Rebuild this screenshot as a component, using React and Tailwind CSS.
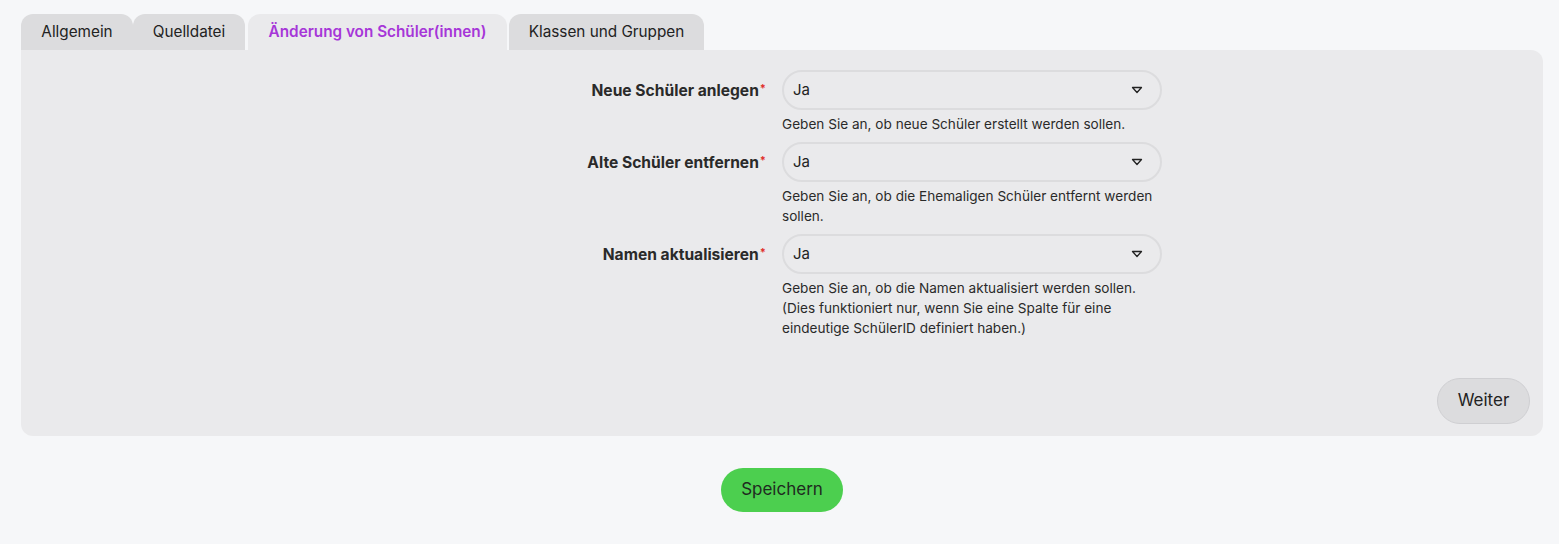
import React from "react";

const Caret = () => (
  <svg width="12" height="8" viewBox="0 0 12 8" className="shrink-0">
    <path d="M1.5 1.5 H10.5 L6 6.5 Z" fill="none" stroke="#222" strokeWidth="1.3" strokeLinejoin="round" />
  </svg>
);

function Row({ label, help }) {
  return (
    <div className="grid grid-cols-2 mb-2">
      <div className="flex justify-end items-start pr-4">
        <div className="h-10 flex items-center pt-[1px] text-[15.6px] font-bold text-[#2a2a2a]">
          {label}
          <span className="text-[#e0302a] text-[11px] self-start mt-[9px] ml-[1px]">*</span>
        </div>
      </div>
      <div>
        <div className="w-[380px] h-10 rounded-full border-2 border-[#dcdcde] flex items-center justify-between pl-[9px] pr-[17px] text-[15px] text-[#222]">
          <span>Ja</span>
          <Caret />
        </div>
        <div className="w-[382px] mt-1 text-[13.6px] leading-5 text-[#2a2a2a]">{help}</div>
      </div>
    </div>
  );
}

export default function App() {
  return (
    <div className="min-h-[544px] bg-[#f6f7f9] pt-[14px] pl-[21px] pr-[16px]" style={{ fontFamily: "Inter, 'Noto Sans', sans-serif" }}>
      <div className="flex items-end text-[15.3px] text-[#222]">
        <div className="h-9 w-[112px] flex items-center justify-center rounded-t-xl bg-[#dcdcde]">Allgemein</div>
        <div className="h-9 w-[112px] flex items-center justify-center rounded-t-xl bg-[#dcdcde]">Quelldatei</div>
        <div className="h-9 w-[259px] flex items-center justify-center rounded-t-xl bg-[#eaeaec] ml-[3px] text-[#a636d8] font-semibold">Änderung von Schüler(innen)</div>
        <div className="h-9 w-[195px] flex items-center justify-center rounded-t-xl bg-[#dcdcde] ml-[2px]">Klassen und Gruppen</div>
      </div>
      <div className="bg-[#eaeaec] rounded-b-xl rounded-tr-xl pt-5 pb-3 px-[13px]">
        <Row label="Neue Schüler anlegen" help="Geben Sie an, ob neue Schüler erstellt werden sollen." />
        <Row label="Alte Schüler entfernen" help="Geben Sie an, ob die Ehemaligen Schüler entfernt werden sollen." />
        <Row label="Namen aktualisieren" help="Geben Sie an, ob die Namen aktualisiert werden sollen. (Dies funktioniert nur, wenn Sie eine Spalte für eine eindeutige SchülerID definiert haben.)" />
        <div className="flex justify-end mt-10">
          <button className="h-[46px] w-[93px] rounded-full bg-[#dcdcde] border border-[#cfcfd2] text-[17px] text-[#222]">Weiter</button>
        </div>
      </div>
      <div className="flex justify-center mt-8">
        <button className="h-11 w-[122px] rounded-full bg-[#4ccf4f] text-[17px] text-[#1f2a1f]">Speichern</button>
      </div>
    </div>
  );
}
